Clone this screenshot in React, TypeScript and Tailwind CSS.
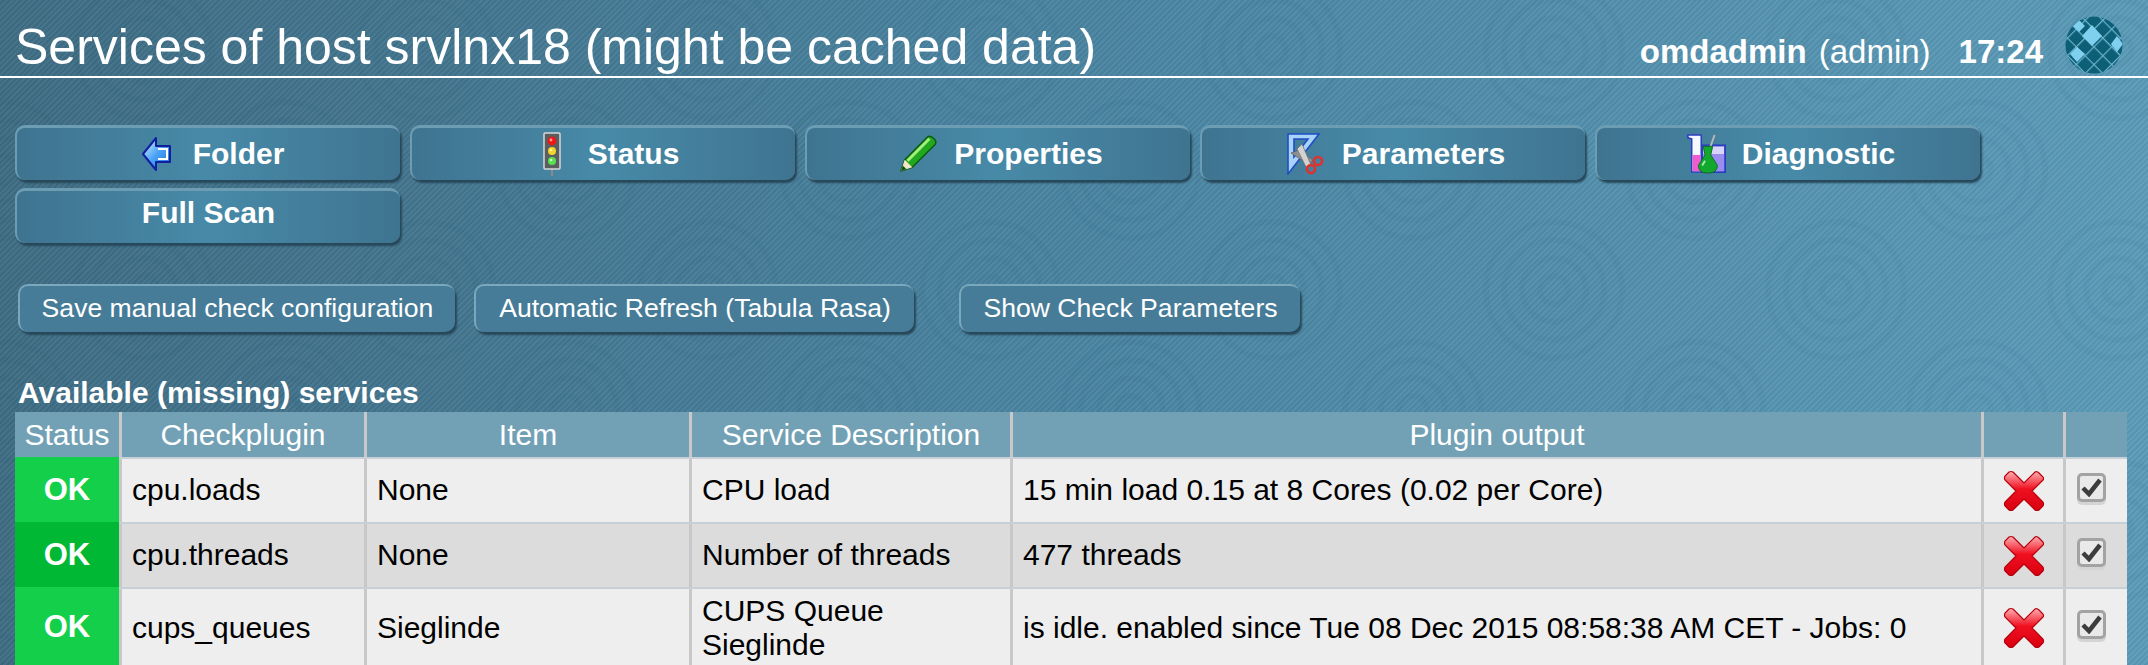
import React from 'react';

const FONT = "font-['Liberation_Sans',Arial,sans-serif]";
const COLS = 'grid-cols-[104px_245px_325px_321px_971px_82px_64px]';

function FolderIcon() {
    return (
        <svg width="31" height="36" viewBox="0 0 31 36">
            <defs>
                <linearGradient id="arrowFill" x1="0" y1="0" x2="1" y2="1">
                    <stop offset="0" stopColor="#e4f2ff" />
                    <stop offset="0.5" stopColor="#4aa3f5" />
                    <stop offset="1" stopColor="#1a6fe0" />
                </linearGradient>
            </defs>
            <path d="M15 2 L2 18 L15 34 L15 26 L29 26 L29 10 L15 10 Z" fill="url(#arrowFill)" stroke="#0f1f9e" strokeWidth="2" strokeLinejoin="round" />
            <path d="M17 13 L26 13 L26 23 L17 23" fill="none" stroke="#ffffff" strokeWidth="2" />
        </svg>
    );
}

function TrafficLightIcon() {
    return (
        <svg width="18" height="44" viewBox="0 0 18 44">
            <rect x="8" y="36" width="2" height="8" fill="#8a8a8a" />
            <rect x="1" y="1" width="16" height="36" rx="1" fill="#5b5e60" stroke="#d8d8d8" strokeWidth="1.5" />
            <circle cx="9" cy="9" r="4.4" fill="#f01616" />
            <circle cx="9" cy="19" r="4" fill="#f2d52a" />
            <circle cx="9" cy="29" r="4" fill="#58e050" />
            <circle cx="8" cy="8" r="1.4" fill="#ff9a9a" />
            <circle cx="8" cy="18" r="1.3" fill="#fff3a8" />
            <circle cx="8" cy="28" r="1.3" fill="#c8ffc0" />
        </svg>
    );
}

function PencilIcon() {
    return (
        <svg width="38" height="38" viewBox="0 0 40 40">
            <path d="M2 38 L6 26 L30 2 Q33 0 37 4 Q40 7 38 10 L14 34 Z" fill="#22a81e" stroke="#0c5a10" strokeWidth="1.5" strokeLinejoin="round" />
            <path d="M9 27 L32 4" stroke="#a5ee7e" strokeWidth="3" />
            <path d="M2 38 L6 26 L14 34 Z" fill="#f3e6c8" />
            <path d="M2 38 L4 32 L8 36 Z" fill="#0c5a10" />
        </svg>
    );
}

function ParametersIcon() {
    return (
        <svg width="38" height="42" viewBox="0 0 38 42">
            <path d="M1 1 L32 1 L1 41 Z M7 6 L7 24 L21 6 Z" fillRule="evenodd" fill="#a9d2fb" stroke="#1d4fc4" strokeWidth="1.6" strokeLinejoin="miter" />
            <path d="M4 20 L22 32 L26 27 L12 17 Z" fill="#8f8f8f" stroke="#5c5c5c" strokeWidth="0.7" />
            <path d="M15 11 L24 32 L19 34 L10 16 Z" fill="#d2d2d2" stroke="#6a6a6a" strokeWidth="0.7" />
            <circle cx="31" cy="28" r="4" fill="none" stroke="#e0312e" strokeWidth="2.6" />
            <circle cx="24" cy="36" r="4" fill="none" stroke="#e0312e" strokeWidth="2.6" />
        </svg>
    );
}

function DiagnosticIcon() {
    return (
        <svg width="40" height="40" viewBox="0 0 42 42">
            <rect x="17" y="12" width="24" height="28" fill="#d9d4fb" stroke="#2b3ec2" strokeWidth="2" />
            <rect x="18" y="21" width="22" height="18" fill="#9b8cf0" />
            <path d="M2 1 L16 1 L16 40 L6 40 L6 5 L2 4 Z" fill="#f4f8ff" stroke="#2b3ec2" strokeWidth="1.6" />
            <rect x="7" y="22" width="8" height="17" fill="#f05cd0" />
            <path d="M30 1 L24 18" stroke="#b8b8b8" strokeWidth="2" />
            <path d="M18 13 L28 13 L26 22 L33 33 Q33 41 23 41 Q13 41 13 33 L20 22 Z" fill="#12a82e" stroke="#0d6a20" strokeWidth="1" />
            <path d="M17 33 L20 28" stroke="#9ceea8" strokeWidth="2" />
        </svg>
    );
}

function DeleteIcon() {
    return (
        <svg width="42" height="42" viewBox="0 0 42 42">
            <defs>
                <linearGradient id="xFill" x1="0" y1="0" x2="0" y2="1">
                    <stop offset="0" stopColor="#ffb0b4" />
                    <stop offset="0.45" stopColor="#f01020" />
                    <stop offset="1" stopColor="#d80010" />
                </linearGradient>
            </defs>
            <path d="M10 2 L21 13 L32 2 Q34 1 36 3 L40 7 Q41 9 40 10 L29 21 L40 32 Q41 34 40 36 L36 40 Q34 41 32 40 L21 29 L10 40 Q8 41 6 40 L2 36 Q1 34 2 32 L13 21 L2 10 Q1 8 2 6 L6 2 Q8 1 10 2 Z" fill="url(#xFill)" stroke="#b4000c" strokeWidth="1.2" />
        </svg>
    );
}

function CheckboxIcon() {
    return (
        <div className="flex h-[29px] w-[29px] items-center justify-center rounded-[5px] border-[3px] border-[#a3a3a3] bg-[#e9e9e9] shadow-[0_3px_0_#d4d4d4]">
            <svg width="21" height="19" viewBox="0 0 21 19">
                <path d="M2 10 L8 16 L19 2" fill="none" stroke="#3c3c3c" strokeWidth="4.5" />
            </svg>
        </div>
    );
}

function Logo() {
    return (
        <svg width="58" height="58" viewBox="0 0 58 58" className="shrink-0">
            <defs>
                <pattern id="logoNet" width="12.5" height="12.5" patternUnits="userSpaceOnUse" patternTransform="translate(29 30) rotate(45)">
                    <rect width="12.5" height="12.5" fill="#0d5f78" />
                    <path d="M0 0 H12.5 M0 0 V12.5" stroke="#6db3cd" strokeWidth="2.4" />
                </pattern>
                <clipPath id="logoClip">
                    <circle cx="29" cy="29" r="28.5" />
                </clipPath>
            </defs>
            <g clipPath="url(#logoClip)">
                <rect width="58" height="58" fill="url(#logoNet)" />
                <path d="M27 9 L37 20 L27 30 L17 20 Z" fill="#7fd0ee" />
                <path d="M12 31 L20 38 L12 46 L5 38 Z" fill="#7fd0ee" />
                <path d="M52 20 L58 28 L52 36 L46 28 Z" fill="#7fd0ee" />
                <path d="M14 4 L20 10 L14 16 L8 10 Z" fill="#7fd0ee" />
            </g>
        </svg>
    );
}

function TabButton({ label, icon }: { label: string; icon?: React.ReactNode }) {
    return (
        <div className={`flex h-[55px] w-[385px] items-center justify-center gap-[12px] rounded-[10px] border-t-[3px] border-l-2 border-t-[#6d9db3] border-l-[#6d9db3] bg-gradient-to-r from-[#3f7490] via-[#478aa8] to-[#3f7490] text-[30px] font-bold text-white shadow-[2px_3px_2px_#27485a] ${icon ? 'pb-[1px]' : 'pb-[10px]'}`}>
            {icon && <div className="flex h-[44px] w-[48px] items-center justify-center">{icon}</div>}
            <span>{label}</span>
        </div>
    );
}

function SmallButton({ label, className }: { label: string; className?: string }) {
    return (
        <div className={`flex h-[48px] items-center justify-center rounded-[10px] border-t-2 border-l-2 border-t-[#7aa8bc] border-l-[#7aa8bc] bg-[#467c98] text-[26.6px] whitespace-nowrap text-white shadow-[2px_3px_2px_#27485a] ${className}`}>
            {label}
        </div>
    );
}

const cellBorder = 'border-l-[3px] border-[#c8c8c8]';
const textCell = `${cellBorder} flex items-center pb-[1px] pl-[10px]`;

function ServiceRow({ plugin, item, description, output, even, height }: {
    plugin: string; item: string; description: React.ReactNode; output: string; even: boolean; height: string;
}) {
    return (
        <div className={`grid ${COLS} border-t-2 border-[#c7d0d6] text-[30px] leading-[34px] text-black ${height} ${even ? 'bg-[#dcdcdc]' : 'bg-[#eeeeee]'}`}>
            <div className={`-mt-[2px] flex items-center justify-center text-[31px] font-bold text-white ${even ? 'bg-[#00b833]' : 'bg-[#14cf49]'}`}>OK</div>
            <div className={textCell}>{plugin}</div>
            <div className={textCell}>{item}</div>
            <div className={textCell}>{description}</div>
            <div className={textCell}>{output}</div>
            <div className={`${cellBorder} flex items-center justify-center`}><DeleteIcon /></div>
            <div className={`${cellBorder} flex items-center pb-[7px] pl-[11px]`}><CheckboxIcon /></div>
        </div>
    );
}

export default function App() {
    const tabs = [
        { label: 'Folder', icon: <FolderIcon /> },
        { label: 'Status', icon: <TrafficLightIcon /> },
        { label: 'Properties', icon: <PencilIcon /> },
        { label: 'Parameters', icon: <ParametersIcon /> },
        { label: 'Diagnostic', icon: <DiagnosticIcon /> },
    ];
    const headers = ['Status', 'Checkplugin', 'Item', 'Service Description', 'Plugin output', '', ''];

    return (
        <div className={`relative h-[665px] w-[2148px] overflow-hidden bg-gradient-to-r from-[#3f6d84] via-[#4a84a1] to-[#5b9bb8] ${FONT}`}>
            {/* diagonal weave and ripples of the page background */}
            <div className="pointer-events-none absolute inset-0 bg-[repeating-linear-gradient(135deg,rgba(255,255,255,0.04)_0px,rgba(255,255,255,0.04)_2px,rgba(0,0,0,0.04)_2px,rgba(0,0,0,0.04)_4px)]" />
            <svg className="pointer-events-none absolute inset-0" width="2148" height="665">
                <defs>
                    <pattern id="ripples" x="3" y="170" width="282" height="240" patternUnits="userSpaceOnUse">
                        {[[141, 120], [0, 0], [282, 0], [0, 240], [282, 240]].map(([cx, cy]) =>
                            [14, 32, 50, 68].map((r) => (
                                <circle key={`${cx}-${cy}-${r}`} cx={cx} cy={cy} r={r} fill="none" stroke="#0d3a50" strokeOpacity="0.035" strokeWidth="6" />
                            ))
                        )}
                    </pattern>
                </defs>
                <rect width="2148" height="665" fill="url(#ripples)" />
            </svg>

            <div className="relative">
                <header className="flex h-[78px] items-end justify-between border-b-2 border-white pr-[25px] pl-[15px] text-white">
                    <h1 className="text-[50px] leading-[58px] font-normal">Services of host srvlnx18 (might be cached data)</h1>
                    <div className="flex items-center gap-[22px]">
                        <div className="flex items-center gap-[28px] pt-[15px] text-[33px]">
                            <span><b>omdadmin</b> <span className="ml-[3px] font-normal">(admin)</span></span>
                            <b>17:24</b>
                        </div>
                        <div className="-mb-[3px]"><Logo /></div>
                    </div>
                </header>

                <div className="mt-[47px] flex flex-wrap gap-x-[10px] gap-y-[8px] pl-[15px]">
                    {tabs.map((tab) => (
                        <TabButton key={tab.label} label={tab.label} icon={tab.icon} />
                    ))}
                    <TabButton label="Full Scan" />
                </div>

                <div className="mt-[41px] flex pl-[18px]">
                    <SmallButton label="Save manual check configuration" className="w-[437px]" />
                    <SmallButton label="Automatic Refresh (Tabula Rasa)" className="ml-[19px] w-[440px]" />
                    <SmallButton label="Show Check Parameters" className="ml-[45px] w-[341px]" />
                </div>

                <h2 className="mt-[44px] mb-[3px] pl-[18px] text-[30px] leading-[33px] font-bold text-white">Available (missing) services</h2>

                <div className="ml-[15px] w-[2112px]">
                    <div className={`grid h-[45px] ${COLS} bg-[#72a1b6] text-[30px] text-white`}>
                        {headers.map((header, i) => (
                            <div key={i} className={`flex items-center justify-center ${i > 0 ? cellBorder : ''}`}>{header}</div>
                        ))}
                    </div>
                    <ServiceRow plugin="cpu.loads" item="None" description="CPU load" output="15 min load 0.15 at 8 Cores (0.02 per Core)" even={false} height="h-[65px]" />
                    <ServiceRow plugin="cpu.threads" item="None" description="Number of threads" output="477 threads" even height="h-[65px]" />
                    <ServiceRow plugin="cups_queues" item="Sieglinde" description={<span>CUPS Queue<br />Sieglinde</span>} output="is idle. enabled since Tue 08 Dec 2015 08:58:38 AM CET - Jobs: 0" even={false} height="h-[80px]" />
                </div>
            </div>
        </div>
    );
}
